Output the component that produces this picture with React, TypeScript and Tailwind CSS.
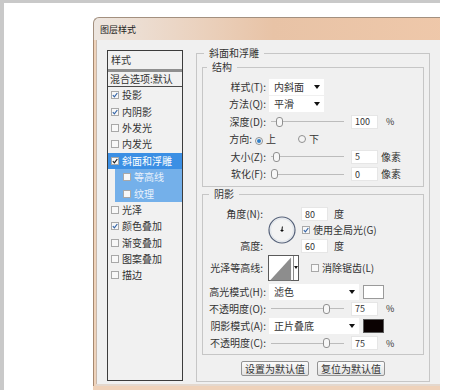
import React from 'react';

const items = [
  { label: '投影', checked: true },
  { label: '内阴影', checked: true },
  { label: '外发光', checked: false },
  { label: '内发光', checked: false },
  { label: '斜面和浮雕', checked: true, selected: true },
  { label: '等高线', checked: false, sub: true },
  { label: '纹理', checked: false, sub: true },
  { label: '光泽', checked: false },
  { label: '颜色叠加', checked: true },
  { label: '渐变叠加', checked: false },
  { label: '图案叠加', checked: false },
  { label: '描边', checked: false },
];

const Check = ({ checked, dark }: { checked?: boolean; dark?: boolean }) => (
  <span className="inline-flex h-[8px] w-[8px] shrink-0 items-center justify-center border border-[#a8a8a8] bg-[#f8f8f8]">
    {checked && (
      <svg width="6" height="6" viewBox="0 0 6 6">
        <path d="M0.8 3.2 L2.4 4.8 L5.3 1" fill="none" stroke={dark ? '#1d1d1d' : '#3565a8'} strokeWidth="1.2" />
      </svg>
    )}
  </span>
);

const Arrow = () => (
  <svg width="6" height="4" viewBox="0 0 6 4">
    <path d="M0 0 H6 L3 4 Z" fill="#111" />
  </svg>
);

const Select = ({ value, w }: { value: string; w: string }) => (
  <div className={`flex h-[16px] items-center justify-between bg-white pl-[5px] pr-[4px] ${w}`}>
    <span>{value}</span>
    <Arrow />
  </div>
);

const Slider = ({ pos }: { pos: number }) => (
  <div className="relative flex h-[10px] w-[73px] items-center">
    <div className="h-px w-full bg-[#bcbcbc]" />
    <div
      className="absolute top-0 h-[10px] w-[7px] rounded-[3px] border border-[#909090] bg-[#f7f7f7]"
      style={{ left: pos }}
    />
  </div>
);

const Field = ({ value }: { value: string }) => (
  <div className="flex h-[14px] w-[27px] items-center border border-[#e6e6e6] bg-white pl-[3px] text-[9px]">
    {value}
  </div>
);

const Radio = ({ on }: { on?: boolean }) => (
  <span className="inline-flex h-[8px] w-[8px] items-center justify-center rounded-full border border-[#909090] bg-[#f4f4f4]">
    {on && <span className="h-[4px] w-[4px] rounded-full bg-[#2f7fc8]" />}
  </span>
);

const SliderRow = ({ label, pos, value, unit }: { label: string; pos: number; value: string; unit: string }) => (
  <div className="flex h-[17.5px] items-center">
    <span className="w-[63px] text-right">{label}</span>
    <div className="ml-[5px]">
      <Slider pos={pos} />
    </div>
    <div className="ml-[7px]">
      <Field value={value} />
    </div>
    <span className={unit === '%' ? 'ml-[8px] text-[9px]' : 'ml-[3px]'}>{unit}</span>
  </div>
);

const Button = ({ children }: { children: React.ReactNode }) => (
  <div className="flex h-[15px] w-[68px] items-center justify-center rounded-[2px] border border-[#939393] bg-linear-to-b from-[#fbfbfb] to-[#e2e2e2]">
    {children}
  </div>
);

export default function App() {
  return (
    <div className="h-[390px] w-[471px] overflow-hidden bg-white font-['Noto_Sans_CJK_SC','Noto_Sans',sans-serif] text-[10px] leading-none text-[#333]">
      <div className="h-full w-[440px] overflow-hidden border-l-4 border-t-[3px] border-[#c9c9c9] pl-[89px] pt-[14px]">
        <div className="flex h-[373px] w-[360px] flex-col">
          {/* title bar */}
          <div className="flex h-[23px] items-center rounded-tl-[6px] border-l border-t border-[#a3907f] bg-linear-to-r from-[#ede6e0] via-[#e8c3a6] to-[#efc8aa] pl-[6px] text-[9px] text-[#222]">
            图层样式
          </div>
          {/* body */}
          <div className="flex flex-1 border-l border-[#a68870]">
            <div className="flex flex-1 flex-col border-l-[2px] border-[#efd3bb]">
              <div className="flex flex-1 gap-[13px] border-l border-[#c9b8aa] bg-[#f0f0f0] pl-[10px] pt-[7px]">
                {/* left list */}
                <div className="mt-[3px] flex h-[331px] w-[76px] flex-col border border-[#3c3c3c] bg-[#f1f1f1]">
                  <div className="flex h-[21px] items-center border-b-[3px] border-[#8f8f8f] pl-[3px]">样式</div>
                  <div className="flex h-[15px] items-center border-b border-[#4a4a4a] pl-[2px]">混合选项:默认</div>
                  {items.map((it) => (
                    <div key={it.label} className={`flex h-[16.4px] ${it.sub ? 'pl-[7px]' : ''}`}>
                      <div
                        className={`flex flex-1 items-center gap-[3px] ${
                          it.selected
                            ? 'bg-[#3b8fe4] pl-[3px] text-white'
                            : it.sub
                            ? 'bg-[#74b0ea] pl-[8px] text-[#e8f1fb]'
                            : 'pl-[3px]'
                        }`}
                      >
                        <Check checked={it.checked} dark={it.selected} />
                        <span>{it.label}</span>
                      </div>
                    </div>
                  ))}
                </div>

                {/* right panel */}
                <fieldset className="h-[335px] w-[234px] border border-[#c6c6c6] px-[5px]">
                  <legend className="ml-[2px] px-[5px] leading-[12px]">斜面和浮雕</legend>

                  <fieldset className="mt-[2px] border border-[#c6c6c6] pb-[3px]">
                    <legend className="ml-[4px] px-[5px] leading-[12px]">结构</legend>
                    <div className="pt-[5px]">
                      <div className="flex h-[17.5px] items-center">
                        <span className="w-[63px] text-right">样式(T):</span>
                        <div className="ml-[3px]">
                          <Select value="内斜面" w="w-[55px]" />
                        </div>
                      </div>
                      <div className="flex h-[17.5px] items-center">
                        <span className="w-[63px] text-right">方法(Q):</span>
                        <div className="ml-[3px]">
                          <Select value="平滑" w="w-[55px]" />
                        </div>
                      </div>
                      <SliderRow label="深度(D):" pos={5} value="100" unit="%" />
                      <div className="flex h-[17.5px] items-center">
                        <span className="w-[49px] text-right">方向:</span>
                        <span className="ml-[3px]">
                          <Radio on />
                        </span>
                        <span className="ml-[3px]">上</span>
                        <span className="ml-[22px]">
                          <Radio />
                        </span>
                        <span className="ml-[3px]">下</span>
                      </div>
                      <SliderRow label="大小(Z):" pos={2} value="5" unit="像素" />
                      <SliderRow label="软化(F):" pos={0} value="0" unit="像素" />
                    </div>
                  </fieldset>

                  <fieldset className="mt-px border border-[#c6c6c6] pb-[2px]">
                    <legend className="ml-[6px] px-[5px] leading-[12px]">阴影</legend>
                    <div className="mt-[6px] flex h-[48px]">
                      <div className="flex w-[60px] flex-col justify-between text-right">
                        <span className="flex h-[16px] items-center justify-end">角度(N):</span>
                        <span className="flex h-[16px] items-center justify-end">高度:</span>
                      </div>
                      <div className="ml-[5px] flex items-center">
                        <svg width="28" height="28" viewBox="0 0 28 28">
                          <circle cx="14" cy="14" r="13" fill="#f3f3f3" stroke="#56627a" strokeWidth="1.2" />
                          <circle cx="14" cy="14" r="11.5" fill="none" stroke="#dde3ea" strokeWidth="1" />
                          <path d="M12.5 14.5 H15.5 M14 13 V16 M14 13.5 L14.4 10.5" stroke="#111" strokeWidth="1" />
                        </svg>
                      </div>
                      <div className="ml-[5px] flex flex-col">
                        <div className="flex h-[16px] items-center">
                          <Field value="80" />
                          <span className="ml-[6px]">度</span>
                        </div>
                        <div className="flex h-[16px] items-center gap-[3px] pl-px">
                          <Check checked />
                          <span>使用全局光(G)</span>
                        </div>
                        <div className="flex h-[16px] items-center">
                          <Field value="60" />
                          <span className="ml-[6px]">度</span>
                        </div>
                      </div>
                    </div>
                    <div className="flex h-[27px] items-center">
                      <span className="w-[60px] text-right">光泽等高线:</span>
                      <div className="ml-[5px] flex h-[26px] w-[31px] border border-[#5a5a5a] bg-white">
                        <svg width="23" height="24" viewBox="0 0 23 24" className="m-px">
                          <path d="M0 24 L22 0 V24 Z" fill="#8d8d8d" />
                        </svg>
                        <div className="flex flex-1 items-center justify-center border-l border-[#8a8a8a]">
                          <svg width="4" height="3" viewBox="0 0 4 3">
                            <path d="M0 0 H4 L2 3 Z" fill="#111" />
                          </svg>
                        </div>
                      </div>
                      <div className="ml-[12px] flex items-center gap-[3px]">
                        <Check />
                        <span>消除锯齿(L)</span>
                      </div>
                    </div>
                    <div className="mt-[2px] flex h-[17px] items-center">
                      <span className="w-[63px] text-right">高光模式(H):</span>
                      <div className="ml-[3px]">
                        <Select value="滤色" w="w-[90px]" />
                      </div>
                      <div className="ml-[4px] h-[14px] w-[21px] border border-[#9a9a9a] bg-white" />
                    </div>
                    <SliderRow label="不透明度(O):" pos={52} value="75" unit="%" />
                    <div className="flex h-[17px] items-center">
                      <span className="w-[63px] text-right">阴影模式(A):</span>
                      <div className="ml-[3px]">
                        <Select value="正片叠底" w="w-[90px]" />
                      </div>
                      <div className="ml-[4px] h-[14px] w-[21px] border border-[#5a5a5a] bg-[#0b0202]" />
                    </div>
                    <SliderRow label="不透明度(C):" pos={52} value="75" unit="%" />
                  </fieldset>

                  <div className="mt-[6px] flex justify-center gap-[8px]">
                    <Button>设置为默认值</Button>
                    <Button>复位为默认值</Button>
                  </div>
                </fieldset>
              </div>
              <div className="h-[2px] bg-[#e4d8ce]" />
            </div>
          </div>
          <div className="h-[4px] bg-[#efd2ba]" />
        </div>
      </div>
    </div>
  );
}
